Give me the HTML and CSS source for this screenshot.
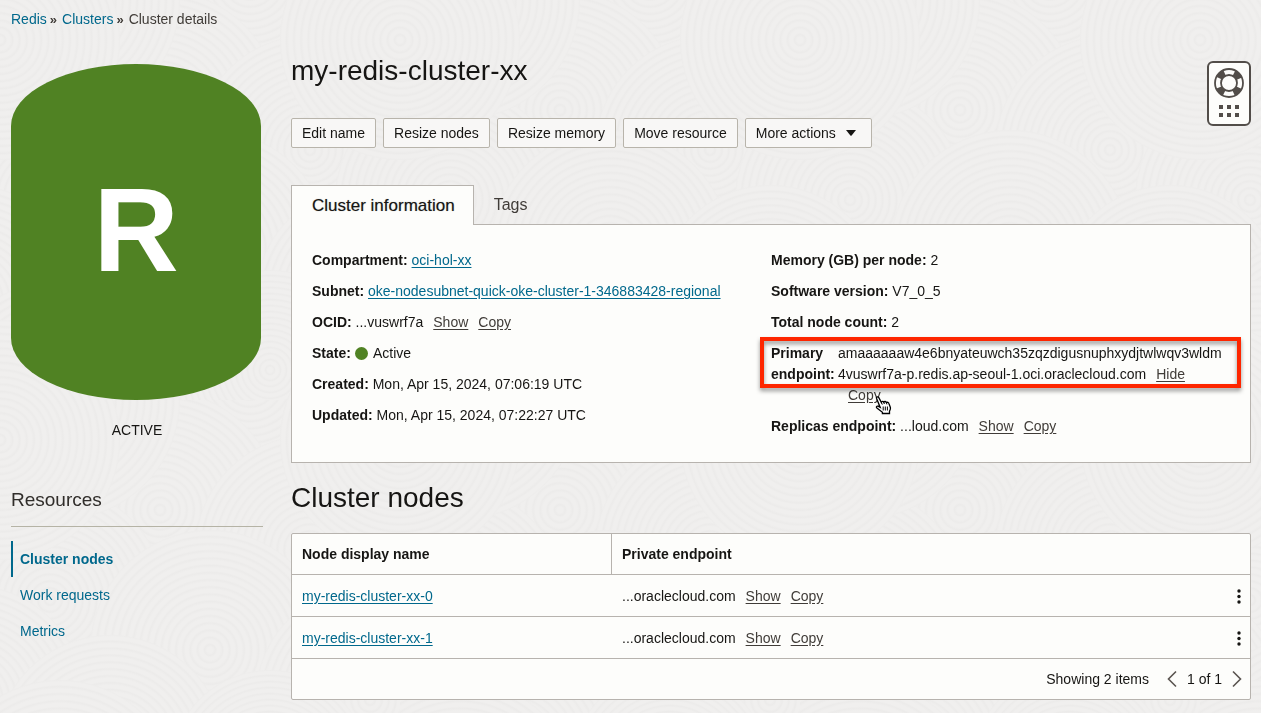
FILE: index.html
```html
<!DOCTYPE html>
<html lang="en">
<head>
<meta charset="utf-8">
<meta name="viewport" content="width=device-width, initial-scale=1">
<title>Cluster details</title>
<link rel="stylesheet" href="styles.css">
</head>
<body class="page">
<svg class="texture" aria-hidden="true">
  <defs>
    <radialGradient id="rings" r="0.03" spreadMethod="repeat">
      <stop offset="0" stop-color="#f0efee"/>
      <stop offset="0.4" stop-color="#f0efee"/>
      <stop offset="0.75" stop-color="#ecebea"/>
      <stop offset="1" stop-color="#f0efee"/>
    </radialGradient>
    <pattern id="waves" width="400" height="400" patternUnits="userSpaceOnUse">
      <g fill="url(#rings)">
        <circle cx="60" cy="0" r="120"/><circle cx="250" cy="-20" r="120"/><circle cx="400" cy="40" r="120"/><circle cx="0" cy="40" r="120"/>
        <circle cx="160" cy="110" r="120"/><circle cx="310" cy="150" r="115"/><circle cx="-90" cy="150" r="115"/>
        <circle cx="50" cy="200" r="115"/><circle cx="450" cy="200" r="115"/><circle cx="210" cy="250" r="120"/>
        <circle cx="370" cy="300" r="115"/><circle cx="-30" cy="300" r="115"/><circle cx="110" cy="350" r="115"/><circle cx="270" cy="370" r="100"/>
        <circle cx="60" cy="400" r="120"/><circle cx="60" cy="0" r="120"/><circle cx="400" cy="440" r="120"/><circle cx="0" cy="440" r="120"/><circle cx="400" cy="40" r="120"/><circle cx="0" cy="40" r="120"/>
      </g>
    </pattern>
  </defs>
  <rect width="100%" height="100%" fill="url(#waves)"/>
</svg>

<nav class="breadcrumb" aria-label="Breadcrumb">
  <a href="#">Redis</a><span class="crumb-sep">»</span><a href="#">Clusters</a><span class="crumb-sep">»</span><span>Cluster details</span>
</nav>

<div class="layout">
  <aside class="sidebar">
    <div class="status-badge">R</div>
    <p class="status-text">ACTIVE</p>
    <h3 class="side-title">Resources</h3>
    <nav class="side-nav" aria-label="Resources">
      <a class="side-link side-link-current" href="#">Cluster nodes</a>
      <a class="side-link" href="#">Work requests</a>
      <a class="side-link" href="#">Metrics</a>
    </nav>
  </aside>

  <main class="main">
    <h1 class="title">my-redis-cluster-xx</h1>
    <div class="toolbar">
      <button class="btn">Edit name</button>
      <button class="btn">Resize nodes</button>
      <button class="btn">Resize memory</button>
      <button class="btn">Move resource</button>
      <button class="btn btn-menu">More actions
        <svg width="10" height="6" viewBox="0 0 10 6" aria-hidden="true"><path d="M0 0h10L5.600 5.400q-.6.500-1.200 0z" fill="#161513"/></svg>
      </button>
    </div>

    <div class="tabs" role="tablist">
      <button class="tab tab-active" role="tab" aria-selected="true">Cluster information</button>
      <button class="tab" role="tab" aria-selected="false">Tags</button>
    </div>
    <section class="panel">
      <div class="facts">
        <p><b>Compartment:</b> <a class="link" href="#">oci-hol-xx</a></p>
        <p><b>Subnet:</b> <a class="link" href="#">oke-nodesubnet-quick-oke-cluster-1-346883428-regional</a></p>
        <p><b>OCID:</b> ...vuswrf7a<a class="action" href="#">Show</a><a class="action" href="#">Copy</a></p>
        <p><b>State:</b> <span class="dot"></span> Active</p>
        <p><b>Created:</b> Mon, Apr 15, 2024, 07:06:19 UTC</p>
        <p><b>Updated:</b> Mon, Apr 15, 2024, 07:22:27 UTC</p>
      </div>
      <div class="facts">
        <p><b>Memory (GB) per node:</b> 2</p>
        <p><b>Software version:</b> V7_0_5</p>
        <p><b>Total node count:</b> 2</p>
        <div class="endpoint">
          <b class="endpoint-label">Primary endpoint:</b>
          <div class="endpoint-value">amaaaaaaw4e6bnyateuwch35zqzdigusnuphxydjtwlwqv3wldm<wbr>4vuswrf7a-p.redis.ap-seoul-1.oci.oraclecloud.com<a class="action" href="#">Hide</a> <a class="action action-hover" href="#">Copy<svg class="pointer" width="17" height="19" viewBox="0 0 17 19" aria-hidden="true"><path d="M1.500 2.200C1.200 1 3 .3 3.800 1.600L6.300 6.300C6.700 5 8.300 5 8.800 6.200 9.500 5.100 11 5.300 11.400 6.600 12.300 5.800 13.600 6.400 14 7.700L15.300 11.300C15.700 12.700 15.100 14.200 14.500 15.200V17.500H7.400V16.200L1.900 12C.8 11 1.800 9.700 3 10.200L5.200 11.400Z" fill="#fff" stroke="#000" stroke-width="1.300"/><path d="M8.200 10.500v4M10.300 10.500v4M12.400 10.500v4M6.300 6.300l1 2.300M8.800 6.200l.6 1.800M11.400 6.600l.5 1.800" fill="none" stroke="#000"/></svg></a></div>
          <span class="highlight"></span>
        </div>
        <p><b>Replicas endpoint:</b> ...loud.com<a class="action" href="#">Show</a><a class="action" href="#">Copy</a></p>
      </div>
    </section>

    <h2 class="title subtitle">Cluster nodes</h2>
    <div class="table-box">
      <table class="nodes">
        <thead>
          <tr><th class="col-name" scope="col">Node display name</th><th scope="col">Private endpoint</th><th class="col-menu"></th></tr>
        </thead>
        <tbody>
          <tr>
            <td><a class="link" href="#">my-redis-cluster-xx-0</a></td>
            <td>...oraclecloud.com<a class="action" href="#">Show</a><a class="action" href="#">Copy</a></td>
            <td class="col-menu"><button class="icon-btn" aria-label="Actions"><svg width="4" height="15" viewBox="0 0 4 15"><g fill="#161513"><circle cx="2" cy="2" r="1.700"/><circle cx="2" cy="7.500" r="1.700"/><circle cx="2" cy="13" r="1.700"/></g></svg></button></td>
          </tr>
          <tr>
            <td><a class="link" href="#">my-redis-cluster-xx-1</a></td>
            <td>...oraclecloud.com<a class="action" href="#">Show</a><a class="action" href="#">Copy</a></td>
            <td class="col-menu"><button class="icon-btn" aria-label="Actions"><svg width="4" height="15" viewBox="0 0 4 15"><g fill="#161513"><circle cx="2" cy="2" r="1.700"/><circle cx="2" cy="7.500" r="1.700"/><circle cx="2" cy="13" r="1.700"/></g></svg></button></td>
          </tr>
        </tbody>
      </table>
      <div class="pager">
        <span class="pager-count">Showing 2 items</span>
        <button class="icon-btn" aria-label="Previous page"><svg width="10" height="18" viewBox="0 0 10 18"><path d="M9 1.500L1.500 9 9 16.500" fill="none" stroke="#5a5450" stroke-width="1.600"/></svg></button>
        <span>1 of 1</span>
        <button class="icon-btn" aria-label="Next page"><svg width="10" height="18" viewBox="0 0 10 18"><path d="M1 1.500L8.500 9 1 16.500" fill="none" stroke="#5a5450" stroke-width="1.600"/></svg></button>
      </div>
    </div>
  </main>
</div>

<button class="help" aria-label="Help">
  <svg width="32" height="52" viewBox="0 0 32 52" aria-hidden="true">
    <circle cx="16" cy="16" r="11" fill="none" stroke="#524d49" stroke-width="6.500" stroke-dasharray="7.600 9.679" stroke-dashoffset="-4.840"/>
    <circle cx="16" cy="16" r="14" fill="none" stroke="#524d49" stroke-width="1.800"/>
    <circle cx="16" cy="16" r="8" fill="none" stroke="#524d49" stroke-width="1.800"/>
    <path d="M6 38h4v4H6zM14 38h4v4h-4zM22 38h4v4h-4zM6 46h4v4H6zM14 46h4v4h-4zM22 46h4v4h-4z" fill="#524d49"/>
  </svg>
</button>
</body>
</html>
```
FILE: styles.css
```css
* { box-sizing: border-box; }

.page {
  margin: 0;
  min-height: 100vh;
  padding: 9px 10px 13px 11px;
  background: #f0efee;
  color: #161513;
  font: 14px/20px "Liberation Sans", Arial, sans-serif;
}

.texture {
  position: fixed;
  inset: 0;
  z-index: -1;
  width: 100%;
  height: 100%;
}

a { color: #00688c; text-decoration: none; }
p { margin: 0; }
button { font: inherit; color: inherit; cursor: pointer; }

.breadcrumb { color: #403c38; }
.crumb-sep { margin: 0 5px 0 3px; font-size: 13px; font-weight: bold; }

.layout {
  display: grid;
  grid-template-columns: 252px minmax(0, 1fr);
  gap: 28px;
}

.sidebar { padding-top: 34px; }

.status-badge {
  display: flex;
  align-items: center;
  justify-content: center;
  width: 250px;
  height: 336px;
  padding-bottom: 4px;
  border-radius: 125px / 62px;
  background: #508223;
  color: #fff;
  font-size: 118px;
  font-weight: bold;
}

.status-text { margin-top: 20px; text-align: center; }

.side-title {
  margin: 48px 0 14px;
  padding-bottom: 14px;
  border-bottom: 1px solid #b5b3a5;
  color: #302d2a;
  font-size: 19px;
  font-weight: 300;
  line-height: 24px;
}

.side-nav { display: flex; flex-direction: column; }
.side-link { padding: 8px 7px; border-left: 2px solid transparent; }
.side-link-current { border-color: #00688c; font-weight: bold; }

.main { padding-top: 24px; }

.title {
  margin: 0;
  font-size: 28px;
  font-weight: normal;
  line-height: 34px;
}

.toolbar { display: flex; flex-wrap: wrap; gap: 7px; margin-top: 30px; }

.btn {
  height: 30px;
  padding: 0 10px;
  border: 1px solid #b8b4ab;
  border-radius: 2px;
  background: #f8f7f6;
}

.btn-menu { display: flex; align-items: center; gap: 10px; padding-right: 15px; }

.tabs { display: flex; margin-top: 37px; }

.tab {
  height: 39px;
  padding: 0 18px 0 20px;
  border: 0;
  background: none;
  color: #403c38;
  font-size: 16px;
}

.tab-active {
  position: relative;
  height: 40px;
  margin-bottom: -1px;
  border: 1px solid #b7b3ae;
  border-bottom: 0;
  background: #fdfdfb;
  color: #161513;
  font-size: 17px;
  text-shadow: 0 0 1px #16151366;
}

.panel {
  display: grid;
  grid-template-columns: 1fr 1fr;
  padding: 25px 20px;
  border: 1px solid #b7b3ae;
  background: #fdfdfb;
  line-height: 21px;
}

.facts { display: flex; flex-direction: column; gap: 10px; }

.link { text-decoration: underline; text-underline-offset: 2px; }

.action {
  display: inline-block;
  margin-left: 10px;
  color: #403c38;
  text-decoration: underline;
  text-underline-offset: 2px;
}

.action-hover { position: relative; }

.dot {
  display: inline-block;
  width: 13px;
  height: 13px;
  margin-right: 2px;
  border-radius: 50%;
  background: #508223;
  vertical-align: -2px;
}

.endpoint { position: relative; display: flex; }
.endpoint-label { flex: 0 0 67px; }
.endpoint-value { flex: 1; min-width: 0; }

.highlight {
  position: absolute;
  inset: -6px -11px auto;
  height: 51px;
  border: 4px solid #fe2600;
  filter: drop-shadow(0 3px 2px #00000066);
  pointer-events: none;
}

.pointer { position: absolute; left: 27px; top: 11px; z-index: 1; }

.subtitle { margin: 18px 0; }

.table-box {
  border: 1px solid #b7b3ae;
  border-radius: 2px;
  background: #fdfdfb;
}

.nodes { width: 100%; border-collapse: separate; border-spacing: 0; }

.nodes th,
.nodes td {
  height: 42px;
  padding: 0 10px;
  border-bottom: 1px solid #b7b3ae;
  text-align: left;
}

.nodes th { height: 41px; }
.nodes .col-name { width: 320px; border-right: 1px solid #b7b3ae; }
.nodes .col-menu { width: 40px; padding: 0 9px; text-align: right; }

.icon-btn {
  display: inline-flex;
  padding: 0;
  border: 0;
  background: none;
  vertical-align: middle;
}

.pager {
  display: flex;
  align-items: center;
  justify-content: flex-end;
  gap: 10px;
  height: 40px;
  padding: 0 8px;
}

.pager-count { margin-right: 8px; }

.help {
  position: absolute;
  top: 61px;
  right: 10px;
  display: flex;
  justify-content: center;
  width: 44px;
  height: 65px;
  padding: 4px 0;
  border: 2px solid #524d49;
  border-radius: 6px;
  background: #fdfdfb;
}
```
